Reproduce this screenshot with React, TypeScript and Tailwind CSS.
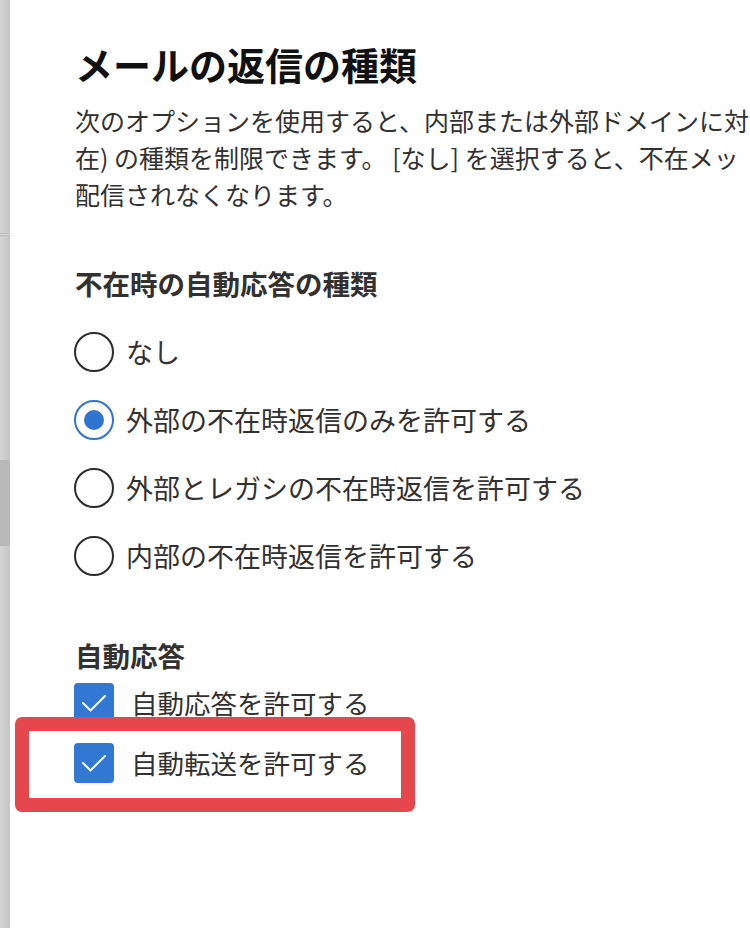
import React from "react"

const font = { fontFamily: '"Noto Sans CJK JP", "Noto Sans", sans-serif' }

const Radio = ({ checked, label }: { checked?: boolean; label: string }) => (
  <div className="flex h-[68px] items-center">
    <div
      className={
        checked
          ? "ml-[-1px] flex h-[40px] w-[40px] items-center justify-center rounded-full border-2 border-[#2f74d0]"
          : "ml-[-1px] flex h-[40px] w-[40px] items-center justify-center rounded-full border-2 border-[#2b2b2b]"
      }
    >
      {checked && <div className="h-[20px] w-[20px] rounded-full bg-[#2f74d0]" />}
    </div>
    <span className="ml-[12px] whitespace-nowrap text-[27px] leading-[36px] text-[#323130]">{label}</span>
  </div>
)

const Checkbox = ({ label }: { label: string }) => (
  <div className="flex h-[60px] items-center">
    <div className="ml-[-1px] flex h-[40px] w-[40px] items-center justify-center rounded-[4px] bg-[#3277d1]">
      <svg width="40" height="40" viewBox="0 0 40 40" fill="none">
        <polyline
          points="9,20 16.5,27.5 31,13"
          stroke="white"
          strokeWidth="2"
          strokeLinecap="round"
          strokeLinejoin="round"
        />
      </svg>
    </div>
    <span className="ml-[17px] whitespace-nowrap text-[26.5px] leading-[36px] text-[#323130]">{label}</span>
  </div>
)

export default function App() {
  return (
    <div className="relative flex h-[928px] w-[750px] overflow-hidden bg-white" style={font}>
      {/* background page edge */}
      <div className="flex w-[10px] flex-col bg-gradient-to-r from-[#d4d4d4] to-[#c5c5c5]">
        <div className="h-[233px]" />
        <div className="h-[3px] border-y border-[#b8b8b8] bg-[#dcdcdc]" />
        <div className="h-[224px]" />
        <div className="h-[86px] bg-[#b9b9b9]" />
      </div>

      <div className="flex-1 overflow-hidden pl-[65px]">
        <h1 className="mt-[40px] whitespace-nowrap text-[38px] font-bold leading-[48px] text-[#111]">
          メールの返信の種類
        </h1>
        <div className="mt-[14px] text-[25px] leading-[37px] text-[#323130]">
          <div className="whitespace-nowrap">次のオプションを使用すると、内部または外部ドメインに対</div>
          <div className="whitespace-nowrap">在) の種類を制限できます。 [なし] を選択すると、不在メッ</div>
          <div className="whitespace-nowrap">配信されなくなります。</div>
        </div>

        <h2 className="mt-[52px] whitespace-nowrap text-[27.5px] font-bold leading-[36px] text-[#323130]">
          不在時の自動応答の種類
        </h2>
        <div className="mt-[17px] flex flex-col">
          <Radio label="なし" />
          <Radio checked label="外部の不在時返信のみを許可する" />
          <Radio label="外部とレガシの不在時返信を許可する" />
          <Radio label="内部の不在時返信を許可する" />
        </div>

        <h2 className="mt-[47px] whitespace-nowrap text-[27.5px] font-bold leading-[36px] text-[#323130]">
          自動応答
        </h2>
        <div className="flex flex-col">
          <Checkbox label="自動応答を許可する" />
          <Checkbox label="自動転送を許可する" />
        </div>
      </div>

      {/* highlight annotation */}
      <div className="absolute left-[15px] top-[717px] h-[95px] w-[400px] rounded-[7px] border-[14px] border-[#e4474c]" />
    </div>
  )
}
